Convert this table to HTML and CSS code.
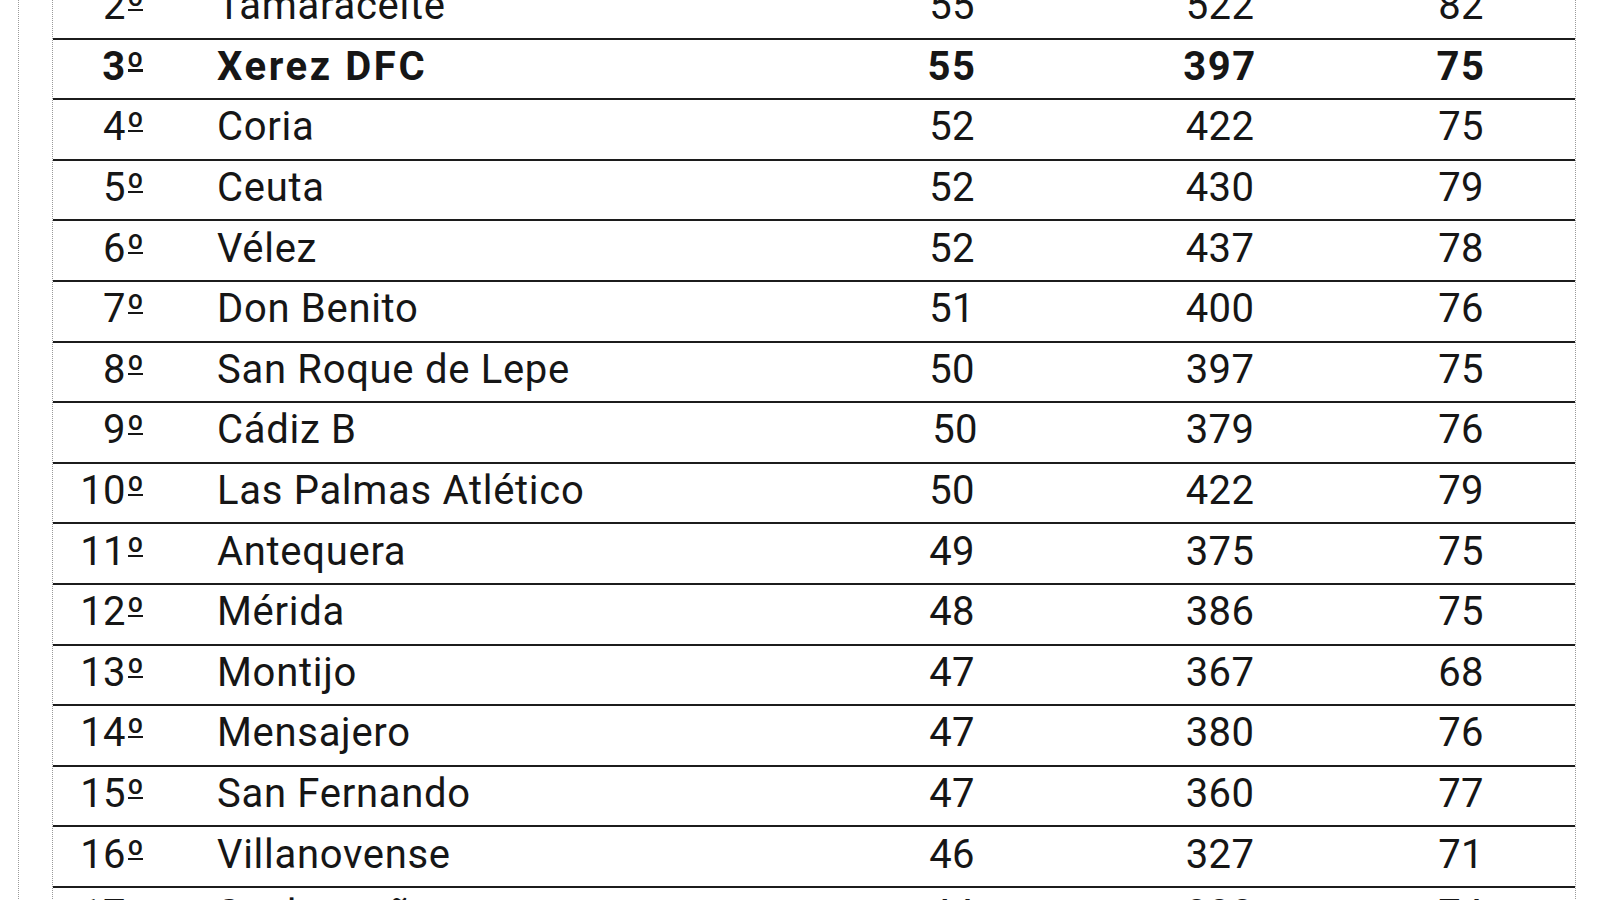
FILE: index.html
```html
<!DOCTYPE html>
<html lang="es">
<head>
<meta charset="utf-8">
<title>Clasificación</title>
<link rel="stylesheet" href="styles.css">
</head>
<body>
<div class="page">
  <div class="standings">
    <div class="row"><span class="pos">2<span class="ord">º</span></span><span class="team">Tamaraceite</span><span class="num pts">55</span><span class="num gf">522</span><span class="num ga">82</span></div>
    <div class="row highlight"><span class="pos">3<span class="ord">º</span></span><span class="team">Xerez DFC</span><span class="num pts">55</span><span class="num gf">397</span><span class="num ga">75</span></div>
    <div class="row"><span class="pos">4<span class="ord">º</span></span><span class="team">Coria</span><span class="num pts">52</span><span class="num gf">422</span><span class="num ga">75</span></div>
    <div class="row"><span class="pos">5<span class="ord">º</span></span><span class="team">Ceuta</span><span class="num pts">52</span><span class="num gf">430</span><span class="num ga">79</span></div>
    <div class="row"><span class="pos">6<span class="ord">º</span></span><span class="team">Vélez</span><span class="num pts">52</span><span class="num gf">437</span><span class="num ga">78</span></div>
    <div class="row"><span class="pos">7<span class="ord">º</span></span><span class="team">Don Benito</span><span class="num pts">51</span><span class="num gf">400</span><span class="num ga">76</span></div>
    <div class="row"><span class="pos">8<span class="ord">º</span></span><span class="team">San Roque de Lepe</span><span class="num pts">50</span><span class="num gf">397</span><span class="num ga">75</span></div>
    <div class="row"><span class="pos">9<span class="ord">º</span></span><span class="team">Cádiz B</span><span class="num pts shifted">50</span><span class="num gf">379</span><span class="num ga">76</span></div>
    <div class="row"><span class="pos">10<span class="ord">º</span></span><span class="team">Las Palmas Atlético</span><span class="num pts">50</span><span class="num gf">422</span><span class="num ga">79</span></div>
    <div class="row"><span class="pos">11<span class="ord">º</span></span><span class="team">Antequera</span><span class="num pts">49</span><span class="num gf">375</span><span class="num ga">75</span></div>
    <div class="row"><span class="pos">12<span class="ord">º</span></span><span class="team">Mérida</span><span class="num pts">48</span><span class="num gf">386</span><span class="num ga">75</span></div>
    <div class="row"><span class="pos">13<span class="ord">º</span></span><span class="team">Montijo</span><span class="num pts">47</span><span class="num gf">367</span><span class="num ga">68</span></div>
    <div class="row"><span class="pos">14<span class="ord">º</span></span><span class="team">Mensajero</span><span class="num pts">47</span><span class="num gf">380</span><span class="num ga">76</span></div>
    <div class="row"><span class="pos">15<span class="ord">º</span></span><span class="team">San Fernando</span><span class="num pts">47</span><span class="num gf">360</span><span class="num ga">77</span></div>
    <div class="row"><span class="pos">16<span class="ord">º</span></span><span class="team">Villanovense</span><span class="num pts">46</span><span class="num gf">327</span><span class="num ga">71</span></div>
    <div class="row"><span class="pos">17<span class="ord">º</span></span><span class="team">Sanluqueño</span><span class="num pts">44</span><span class="num gf">333</span><span class="num ga">74</span></div>
  </div>
</div>
</body>
</html>
```
FILE: styles.css
```css
html, body {
  margin: 0;
  padding: 0;
  background: #ffffff;
  height: 900px;
  overflow: hidden;
}

.page {
  margin-left: 18px;
  width: 1558px;
  min-height: 1000px;
  border-left: 1px dotted #9a9a9a;
  padding-left: 33px;
  box-sizing: border-box;
}

.standings {
  margin-top: -21px;
  width: 1524px;
  min-height: 1000px;
  border-left: 1px dotted #9a9a9a;
  border-right: 1px dotted #9a9a9a;
  box-sizing: border-box;
  font-family: Roboto, "Liberation Sans", Arial, sans-serif;
  font-size: 40px;
  color: #161616;
}

.row {
  display: grid;
  grid-template-columns: 88px 711px 200px 336px 146px 1fr;
  align-items: center;
  height: 60.6px;
  box-sizing: border-box;
  border-bottom: 2px solid #1c1c1c;
  padding-bottom: 4px;
  line-height: 1;
}

.pos {
  text-align: right;
  letter-spacing: 0.3px;
  margin-right: -3px;
}

.ord {
  position: relative;
  font-size: 38px;
  vertical-align: 1px;
  letter-spacing: 0;
  margin-left: 1px;
}

.ord::after {
  content: "";
  position: absolute;
  left: 1px;
  right: 1px;
  bottom: 16px;
  height: 2px;
  background: currentColor;
}

.highlight .ord::after {
  height: 3px;
}

.team {
  padding-left: 76px;
  letter-spacing: 0.7px;
  white-space: nowrap;
}

.num {
  text-align: center;
  letter-spacing: 0.3px;
}

.shifted {
  padding-left: 6px;
}

.highlight {
  font-weight: 700;
}

.highlight .num {
  letter-spacing: 1.6px;
}

.highlight .team {
  letter-spacing: 2.6px;
}
```
